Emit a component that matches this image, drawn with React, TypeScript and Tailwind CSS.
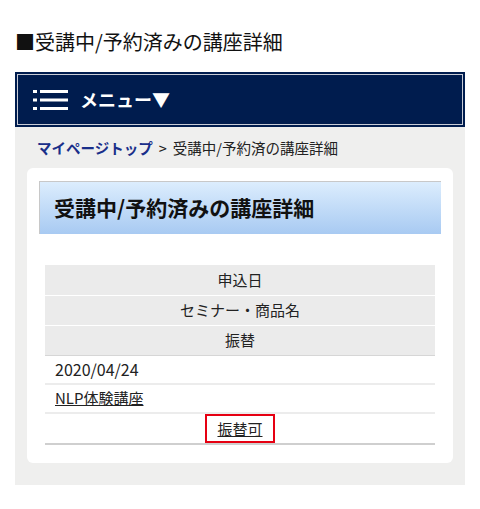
import React from 'react';

const jp = { fontFamily: '"Noto Sans CJK JP", "Noto Sans", sans-serif' };

function MenuIcon() {
  return (
    <svg width="35" height="22" viewBox="0 0 35 22" className="shrink-0">
      <g fill="#ffffff">
        <rect x="0" y="1" width="4" height="3" />
        <rect x="7" y="1" width="28" height="3" />
        <rect x="0" y="9.5" width="4" height="3" />
        <rect x="7" y="9.5" width="28" height="3" />
        <rect x="0" y="18" width="4" height="3" />
        <rect x="7" y="18" width="28" height="3" />
      </g>
    </svg>
  );
}

export default function App() {
  return (
    <div className="w-[480px] min-h-[509px] bg-white text-[#222]" style={jp}>
      <div className="px-[15px] pt-[28px]">
        <h1 className="text-[20px] leading-[28px] text-[#111]">■受講中/予約済みの講座詳細</h1>

        <div className="mt-[16px] bg-[#001c4e] p-[2px]">
          <div className="flex h-[51px] items-center gap-[12px] border border-[#c9ccd6] pl-[15px]">
            <MenuIcon />
            <span className="text-[18px] font-bold text-white">メニュー▼</span>
          </div>
        </div>

        <div className="bg-[#efefee] px-[12px] pb-[22px] pt-[10px]">
          <p className="pl-[10px] text-[14.5px] leading-[22px]">
            <span className="font-bold text-[#1a2f8a]">マイページトップ</span>
            <span className="mx-[6px] text-[#222]">&gt;</span>
            <span className="text-[#222]">受講中/予約済の講座詳細</span>
          </p>

          <div className="mt-[9px] rounded-[6px] bg-white px-[12px] pb-[18px] pt-[13px]">
            <div className="flex h-[53px] items-center border-l border-t border-[#c8c8c8] bg-gradient-to-b from-[#dcedfd] to-[#a8caf2] pl-[14px]">
              <h2 className="text-[21px] font-bold text-[#111]">受講中/予約済みの講座詳細</h2>
            </div>

            <table className="mx-[6px] mt-[31px] w-[390px] border-collapse text-[15px]">
              <tbody>
                <tr>
                  <th className="h-[30px] border-b border-white bg-[#ebebeb] font-normal">申込日</th>
                </tr>
                <tr>
                  <th className="h-[30px] border-b border-white bg-[#ebebeb] font-normal">セミナー・商品名</th>
                </tr>
                <tr>
                  <th className="h-[30px] border-b border-[#d6d6d6] bg-[#ebebeb] font-normal">振替</th>
                </tr>
                <tr>
                  <td className="h-[29px] border-b-2 border-[#ececec] pl-[10px] text-[16px]">2020/04/24</td>
                </tr>
                <tr>
                  <td className="h-[29px] border-b-2 border-[#ececec] pl-[10px]">
                    <a href="#" className="text-[#222] underline">NLP体験講座</a>
                  </td>
                </tr>
                <tr>
                  <td className="h-[30px] border-b-2 border-[#cfcfcf] text-center">
                    <span className="inline-block border-2 border-[#e60012] px-[10px] leading-[25px]">
                      <a href="#" className="text-[#222] underline">振替可</a>
                    </span>
                  </td>
                </tr>
              </tbody>
            </table>
          </div>
        </div>
      </div>
    </div>
  );
}
